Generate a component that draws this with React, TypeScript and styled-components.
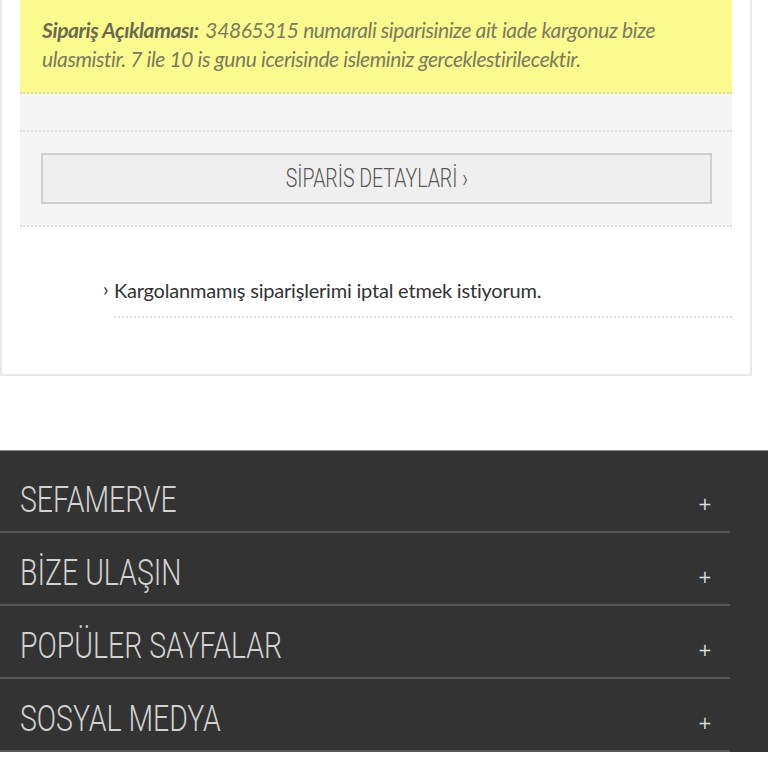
import React from "react";
import styled, { createGlobalStyle } from "styled-components";

const Global = createGlobalStyle`
  html, body { margin: 0; padding: 0; background: #ffffff; }
  body { font-family: "Lato", "Open Sans", sans-serif; }
`;

const Page = styled.div`
  width: 768px;
  display: flex;
  flex-direction: column;
`;

const Card = styled.div`
  width: 752px;
  box-sizing: border-box;
  border: 2px solid #e8e8e8;
  border-top: none;
  padding: 0 18px 56px 18px;
  background: #fff;
`;

const Notice = styled.div`
  background: #fafa8e;
  padding: 15px 22px 19px 22px;
  border-bottom: 2px dotted #dcdcc0;
  font-family: "Lato", sans-serif;
  font-style: italic;
  font-size: 21px;
  line-height: 29px;
  letter-spacing: -0.4px;
  color: #7b7b60;
`;

const NoticeLabel = styled.strong`
  font-weight: 700;
  color: #6a6a52;
  margin-right: 2px;
`;

const GreySection = styled.div`
  background: #f5f5f5;
  display: flex;
  flex-direction: column;
`;

const Spacer = styled.div`
  height: 36px;
  border-bottom: 2px dotted #dddddd;
`;

const ButtonWrap = styled.div`
  padding: 21px 20px 21px 21px;
  border-bottom: 2px dotted #dddddd;
`;

const DetailButton = styled.button`
  width: 100%;
  height: 51px;
  box-sizing: border-box;
  background: #efefef;
  border: 2px solid #d0d0d0;
  display: flex;
  align-items: center;
  justify-content: center;
  padding: 0;
  cursor: pointer;
`;

const Condensed = styled.span<{ $scale: number; $origin?: string }>`
  display: inline-block;
  transform: scaleX(${(p) => p.$scale});
  transform-origin: ${(p) => p.$origin || "left center"};
  white-space: nowrap;
`;

const ButtonText = styled(Condensed)`
  font-family: "Roboto", sans-serif;
  font-weight: 300;
  font-size: 25px;
  color: #555555;
`;

const LinkList = styled.ul`
  list-style: none;
  margin: 0;
  padding: 46px 0 0 94px;
`;

const LinkItem = styled.li`
  position: relative;
  border-bottom: 2px dotted #e2e2e2;
  padding: 0 0 9px 0;
  font-family: "Lato", sans-serif;
  font-size: 20px;
  line-height: 34px;
  letter-spacing: -0.2px;
  color: #333333;
`;

const Marker = styled.span`
  position: absolute;
  left: -11px;
  top: -2px;
  font-size: 20px;
  color: #333;
`;

const Gap = styled.div`
  height: 74px;
`;

const Footer = styled.footer`
  background: #333333;
  border-top: 1px solid #8a8a8a;
  padding-top: 9px;
  display: flex;
  flex-direction: column;
`;

const FooterRow = styled.div`
  width: 730px;
  height: 73px;
  box-sizing: border-box;
  border-bottom: 2px solid #565656;
  display: flex;
  align-items: center;
  justify-content: space-between;
  padding: 8px 18px 0 20px;
`;

const FooterTitle = styled(Condensed)`
  font-family: "Roboto", sans-serif;
  font-weight: 300;
  font-size: 36px;
  line-height: 40px;
  color: #d2d2d2;
`;

const Plus = styled.span`
  font-family: "DejaVu Sans", sans-serif;
  font-size: 17px;
  color: #dddddd;
  margin-top: 8px;
`;

const footerItems = ["SEFAMERVE", "BİZE ULAŞIN", "POPÜLER SAYFALAR", "SOSYAL MEDYA"];

export default function App() {
  return (
    <Page>
      <Global />
      <Card>
        <Notice>
          <NoticeLabel>Sipariş Açıklaması:</NoticeLabel> 34865315 numarali siparisinize ait iade kargonuz bize
          ulasmistir. 7 ile 10 is gunu icerisinde isleminiz gerceklestirilecektir.
        </Notice>
        <GreySection>
          <Spacer />
          <ButtonWrap>
            <DetailButton>
              <ButtonText $scale={0.78} $origin="center">SİPARİS DETAYLARİ ›</ButtonText>
            </DetailButton>
          </ButtonWrap>
        </GreySection>
        <LinkList>
          <LinkItem>
            <Marker>›</Marker>
            Kargolanmamış siparişlerimi iptal etmek istiyorum.
          </LinkItem>
        </LinkList>
      </Card>
      <Gap />
      <Footer>
        {footerItems.map((t) => (
          <FooterRow key={t}>
            <FooterTitle $scale={0.79}>{t}</FooterTitle>
            <Plus>+</Plus>
          </FooterRow>
        ))}
      </Footer>
    </Page>
  );
}
